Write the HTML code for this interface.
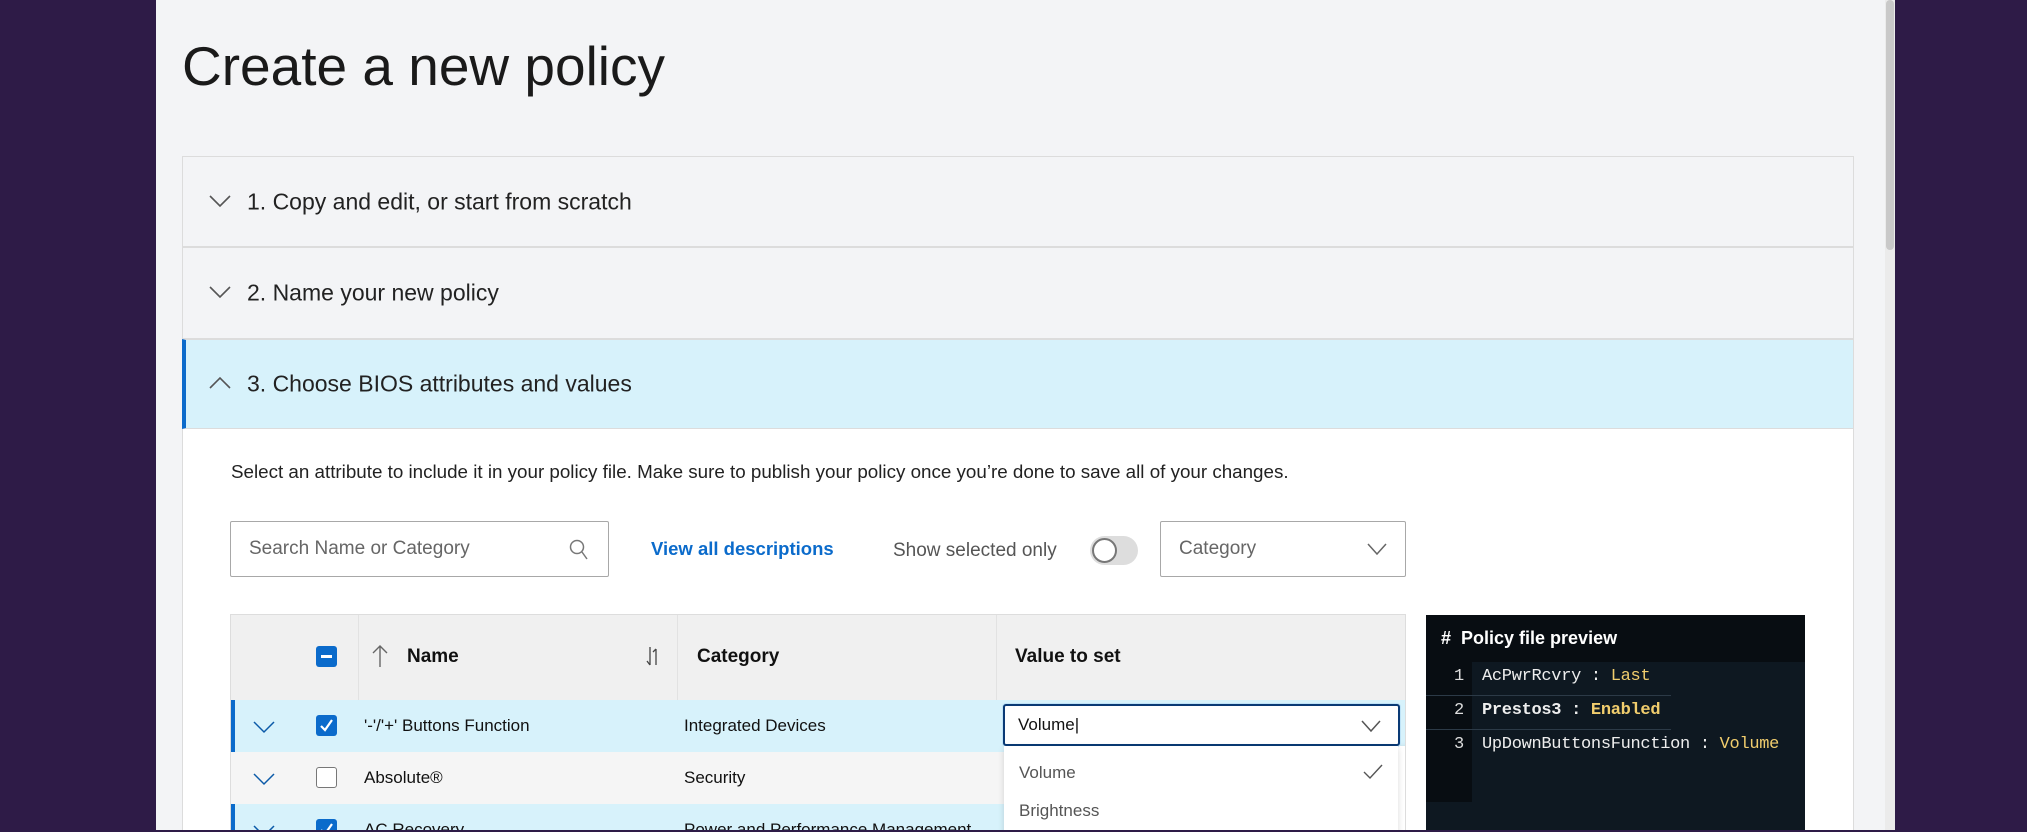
<!DOCTYPE html>
<html><head><style>
*{box-sizing:border-box;margin:0;padding:0}
body{width:2027px;height:832px;background:#2e1b47;font-family:"Liberation Sans",sans-serif;position:relative;overflow:hidden;color:#111}
.panel{position:absolute;left:156px;top:0;width:1739px;height:830px;background:#f3f4f6;overflow:hidden}
.abs{position:absolute}
h1{position:absolute;left:26px;top:34px;font-weight:normal;font-size:55px;color:#1a1a1a;letter-spacing:0px}
.acc{position:absolute;left:26px;width:1672px;border:1px solid #dcdcdc;background:#f3f4f6}
.acc .t{position:absolute;left:64px;font-size:23px;color:#222;top:50%;transform:translateY(-50%)}
.chev{position:absolute;left:26px;top:50%;margin-top:-8px}
.ctl{font-size:19px;color:#666}
</style></head><body>
<div class="panel">
<h1>Create a new policy</h1>
<div class="acc" style="top:156px;height:91px"><svg class="chev" width="22" height="14"><path d="M1 2 L11 12 L21 2" fill="none" stroke="#555" stroke-width="1.6"/></svg><span class="t">1. Copy and edit, or start from scratch</span></div>
<div class="acc" style="top:247px;height:92px"><svg class="chev" width="22" height="14"><path d="M1 2 L11 12 L21 2" fill="none" stroke="#555" stroke-width="1.6"/></svg><span class="t">2. Name your new policy</span></div>
<div class="acc" style="top:339px;height:90px;background:#d7f2fb;border-left:4px solid #0b6bcb"><svg class="chev" width="22" height="14" style="left:23px"><path d="M1 12 L11 2 L21 12" fill="none" stroke="#555" stroke-width="1.6"/></svg><span class="t" style="left:61px">3. Choose BIOS attributes and values</span></div>
<div class="abs" style="left:26px;top:429px;width:1672px;height:410px;background:#fff;border-left:1px solid #dcdcdc;border-right:1px solid #dcdcdc"></div>
<div class="abs" style="left:75px;top:461px;font-size:18.8px;color:#222">Select an attribute to include it in your policy file. Make sure to publish your policy once you’re done to save all of your changes.</div>
<div class="abs" style="left:74px;top:521px;width:379px;height:56px;border:1px solid #a8a8a8;border-radius:2px;background:#fff"><span class="ctl abs" style="left:18px;top:16px">Search Name or Category</span><svg class="abs" style="left:338px;top:17px" width="20" height="22"><circle cx="8" cy="8" r="6.5" fill="none" stroke="#777" stroke-width="1.5"/><path d="M13 13 L18 20" stroke="#777" stroke-width="1.5"/></svg></div>
<div class="abs" style="left:495px;top:538px;font-size:18.5px;color:#0b6bcb;font-weight:bold">View all descriptions</div>
<div class="abs" style="left:737px;top:540px;font-size:19px;color:#555">Show selected only</div>
<div class="abs" style="left:934px;top:536px;width:48px;height:29px;border-radius:15px;background:#ddd"><div class="abs" style="left:2px;top:2px;width:25px;height:25px;border-radius:50%;background:#fff;border:2px solid #777"></div></div>
<div class="abs" style="left:1004px;top:521px;width:246px;height:56px;border:1px solid #a8a8a8;border-radius:2px;background:#fff"><span class="ctl abs" style="left:18px;top:16px">Category</span><svg class="abs" style="left:206px;top:21px" width="20" height="13"><path d="M1 1 L10 11 L19 1" fill="none" stroke="#666" stroke-width="1.5"/></svg></div>
<!-- table -->
<div class="abs" style="left:74px;top:614px;width:1176px;height:230px;border:1px solid #ddd;background:#fff;overflow:hidden">
<div class="abs" style="left:0;top:0;width:1176px;height:85px;background:#f0f0f0"></div>
<div class="abs" style="left:127px;top:0;width:1px;height:85px;background:#e2e2e2"></div>
<div class="abs" style="left:446px;top:0;width:1px;height:85px;background:#e2e2e2"></div>
<div class="abs" style="left:765px;top:0;width:1px;height:85px;background:#e2e2e2"></div>
<div class="abs" style="left:85px;top:31px;width:21px;height:21px;background:#0b6bcb;border-radius:3px"><div class="abs" style="left:5px;top:9px;width:11px;height:3px;background:#fff"></div></div>
<svg class="abs" style="left:141px;top:29px" width="16" height="24"><path d="M8 23 V2 M1 9 L8 2 L15 9" fill="none" stroke="#666" stroke-width="1.4"/></svg>
<div class="abs" style="left:176px;top:31px;font-size:19px;font-weight:bold">Name</div>
<svg class="abs" style="left:414px;top:32px" width="16" height="20"><path d="M5 0 V18 M2 14 L5 18 M11 18 V2 M8 5 L11 2" fill="none" stroke="#444" stroke-width="1.3"/></svg>
<div class="abs" style="left:466px;top:31px;font-size:19px;font-weight:bold">Category</div>
<div class="abs" style="left:784px;top:31px;font-size:19px;font-weight:bold">Value to set</div>
<!-- rows -->
<div class="abs" style="left:0;top:85px;width:1176px;height:52px;background:#d7f2fb;border-left:4px solid #0b6bcb"></div>
<div class="abs" style="left:0;top:137px;width:1176px;height:52px;background:#f5f5f5"></div>
<div class="abs" style="left:0;top:189px;width:1176px;height:52px;background:#d7f2fb;border-left:4px solid #0b6bcb"></div>
<svg class="abs" style="left:22px;top:106px" width="22" height="13"><path d="M1 1 L11 11 L21 1" fill="none" stroke="#0b5aa8" stroke-width="1.5"/></svg>
<svg class="abs" style="left:22px;top:158px" width="22" height="13"><path d="M1 1 L11 11 L21 1" fill="none" stroke="#0b5aa8" stroke-width="1.5"/></svg>
<svg class="abs" style="left:22px;top:210px" width="22" height="13"><path d="M1 1 L11 11 L21 1" fill="none" stroke="#0b5aa8" stroke-width="1.5"/></svg>
<div class="abs" style="left:85px;top:100px;width:21px;height:21px;background:#0b6bcb;border-radius:3px"><svg width="21" height="21"><path d="M5 11 L9 15 L16 5" fill="none" stroke="#fff" stroke-width="2.2"/></svg></div>
<div class="abs" style="left:85px;top:152px;width:21px;height:21px;background:#fff;border:1.5px solid #777;border-radius:3px"></div>
<div class="abs" style="left:85px;top:204px;width:21px;height:21px;background:#0b6bcb;border-radius:3px"><svg width="21" height="21"><path d="M5 11 L9 15 L16 5" fill="none" stroke="#fff" stroke-width="2.2"/></svg></div>
<div class="abs" style="left:133px;top:101px;font-size:17px">'-'/'+' Buttons Function</div>
<div class="abs" style="left:453px;top:101px;font-size:17px">Integrated Devices</div>
<div class="abs" style="left:133px;top:153px;font-size:17px">Absolute®</div>
<div class="abs" style="left:453px;top:153px;font-size:17px">Security</div>
<div class="abs" style="left:133px;top:205px;font-size:17px">AC Recovery</div>
<div class="abs" style="left:453px;top:205px;font-size:17px">Power and Performance Management</div>
<div class="abs" style="left:930px;top:131px;width:394px;height:100px;background:#fff;box-shadow:0 2px 6px rgba(0,0,0,.2)"></div>
</div>
<div class="abs" style="left:847px;top:704px;width:397px;height:42px;border:2px solid #0a3a75;border-radius:3px;background:#fff;box-shadow:0 0 0 1px #bfe3f7"><span class="abs" style="left:13px;top:9px;font-size:17px">Volume|</span><svg class="abs" style="left:356px;top:14px" width="20" height="13"><path d="M1 1 L10 11 L19 1" fill="none" stroke="#555" stroke-width="1.5"/></svg></div>
<div class="abs" style="left:848px;top:746px;width:394px;height:90px;background:#fff;box-shadow:0 2px 6px rgba(0,0,0,.15)"><span class="abs" style="left:15px;top:17px;font-size:17px;color:#555">Volume</span><svg class="abs" style="left:359px;top:18px" width="20" height="16"><path d="M1 8 L7 14 L19 1" fill="none" stroke="#555" stroke-width="1.4"/></svg><span class="abs" style="left:15px;top:55px;font-size:17px;color:#555">Brightness</span></div>
<!-- preview -->
<div class="abs" style="left:1270px;top:615px;width:379px;height:230px;background:#0e1821;font-family:'Liberation Mono',monospace">
<div class="abs" style="left:0;top:0;width:379px;height:47px;background:#080d12"></div>
<div class="abs" style="left:0;top:47px;width:46px;height:140px;background:#080d12"></div>
<div class="abs" style="left:0;top:80px;width:245px;height:1px;background:#2c3a47"></div>
<div class="abs" style="left:0;top:114px;width:245px;height:1px;background:#2c3a47"></div>
<div class="abs" style="left:15px;top:13px;font-family:'Liberation Sans',sans-serif;font-size:18px;font-weight:bold;color:#fff"># &nbsp;Policy file preview</div>
<div class="abs" style="left:28px;top:45px;font-size:17px;color:#ddd;line-height:34px;white-space:pre">1
2
3</div>
<div class="abs" style="left:56px;top:45px;font-size:17px;color:#eee;line-height:34px;white-space:pre;letter-spacing:-0.3px">AcPwrRcvry : <span style="color:#f1cd6d">Last</span>
<b>Prestos3 : <span style="color:#f1cd6d">Enabled</span></b>
UpDownButtonsFunction : <span style="color:#f1cd6d">Volume</span></div>
</div>
<div class="abs" style="left:1729px;top:0;width:10px;height:830px;background:#ebebeb"></div>
<div class="abs" style="left:1730px;top:0;width:8px;height:250px;background:#c9c9c9;border-radius:4px"></div>
</div>
</body></html>
